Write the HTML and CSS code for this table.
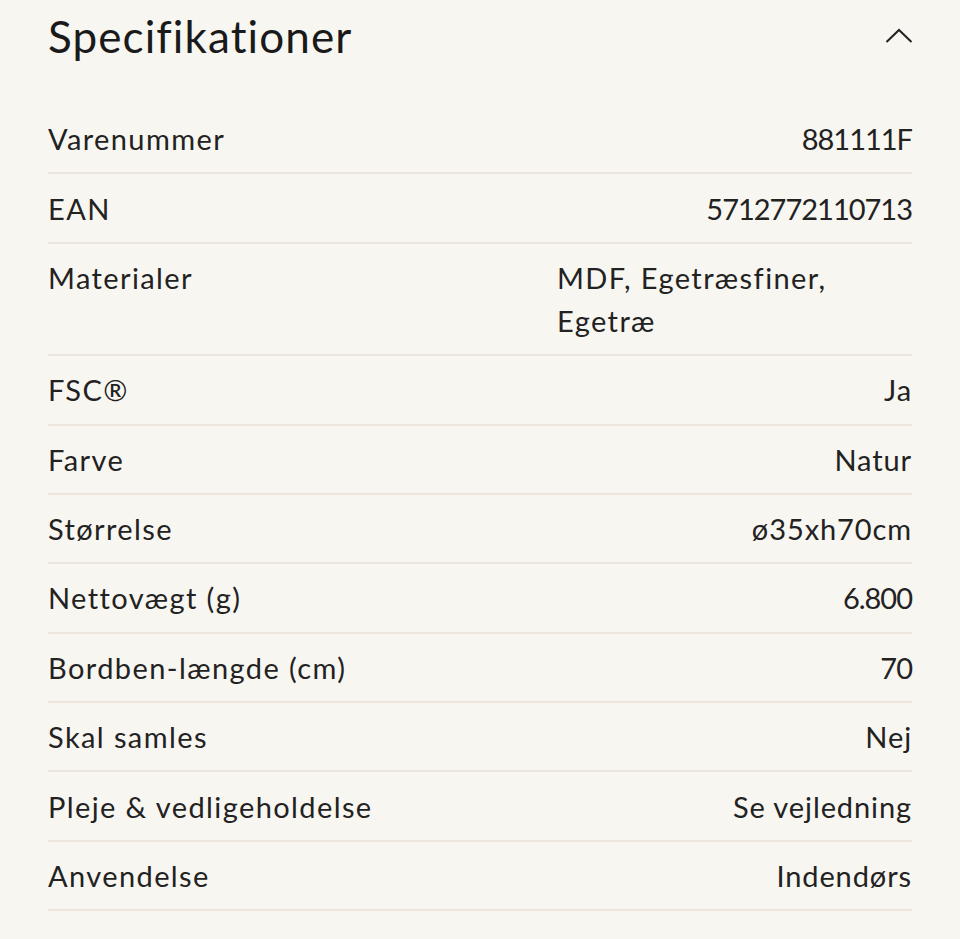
FILE: index.html
```html
<!DOCTYPE html>
<html lang="da">

<head>
    <meta charset="UTF-8">
    <meta name="viewport" content="width=device-width, initial-scale=1.0">
    <title>Specifikationer</title>
    <link rel="stylesheet" href="styles.css">
</head>

<body>
    <div class="specs">
        <div class="specs-head">
            <h2>Specifikationer</h2>
            <svg class="chevron" width="28" height="16" viewBox="0 0 28 16">
                <path d="M1.5 14 L14 2 L26.5 14" fill="none" stroke="#222" stroke-width="2" />
            </svg>
        </div>
        <ul class="specs-list">
            <li><span class="label">Varenummer</span><span class="value num">881111F</span></li>
            <li><span class="label">EAN</span><span class="value num">5712772110713</span></li>
            <li><span class="label">Materialer</span><span class="value wide">MDF, Egetræsfiner, Egetræ</span></li>
            <li><span class="label">FSC®</span><span class="value">Ja</span></li>
            <li><span class="label">Farve</span><span class="value">Natur</span></li>
            <li><span class="label">Størrelse</span><span class="value">ø35xh70cm</span></li>
            <li><span class="label">Nettovægt (g)</span><span class="value num">6.800</span></li>
            <li><span class="label">Bordben-længde (cm)</span><span class="value num">70</span></li>
            <li><span class="label">Skal samles</span><span class="value">Nej</span></li>
            <li><span class="label">Pleje &amp; vedligeholdelse</span><span class="value">Se vejledning</span></li>
            <li><span class="label">Anvendelse</span><span class="value">Indendørs</span></li>
        </ul>
    </div>
</body>

</html>
```

FILE: styles.css
```css
html, body {
    margin: 0;
    background: #f8f6f1;
}
body {
    font-family: Lato, "Open Sans", sans-serif;
    color: #222;
}

/*--------------------------*/
.specs {
    padding: 0 48px;
}
.specs-head {
    height: 72px;
    display: flex;
    align-items: center;
    justify-content: space-between;
    margin-bottom: 33px;
}
.specs-head h2 {
    margin: 0;
    font-size: 44px;
    font-weight: 400;
    letter-spacing: 1.1px;
    color: #1a1a1a;
}
.specs-head .chevron {
    display: block;
    margin-right: -1px;
}

.specs-list {
    list-style: none;
    margin: 0;
    padding: 0;
}
.specs-list li {
    display: flex;
    justify-content: space-between;
    align-items: flex-start;
    gap: 24px;
    padding: 12.2px 0;
    border-bottom: 2px solid #ece6dc;
    font-size: 29px;
    line-height: 43px;
    letter-spacing: 1.4px;
}
.specs-list .label {
    flex: none;
}
.specs-list .value {
    text-align: right;
    letter-spacing: .9px;
}
.specs-list .value.num {
    letter-spacing: -1px;
}
.specs-list .value.wide {
    flex: 0 0 355px;
    box-sizing: border-box;
    padding-right: 60px;
    text-align: left;
    letter-spacing: 1.4px;
}
```
